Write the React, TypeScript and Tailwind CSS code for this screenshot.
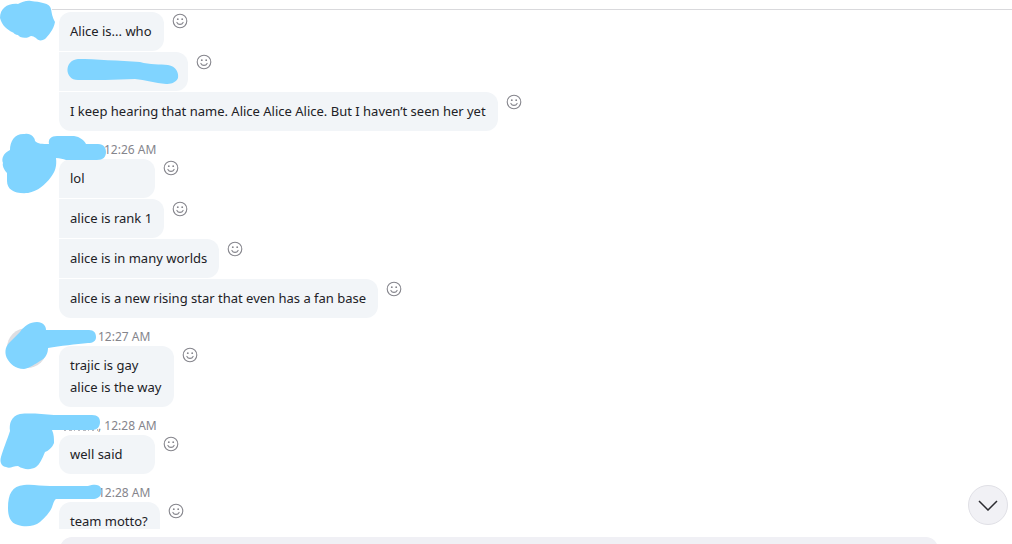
type Message = {
  text?: string;
  scribble?: boolean;
};

type Group = {
  time?: string;
  nameWidth?: string;
  messages: Message[];
  viewBox: string;
  blob: string;
  avatar?: boolean;
  trace?: boolean;
};

const groups: Group[] = [
  {
    messages: [
      { text: 'Alice is... who' },
      { scribble: true },
      { text: 'I keep hearing that name. Alice Alice Alice. But I haven’t seen her yet' },
    ],
    viewBox: '0 12 110 64',
    blob: 'M0 18C0 8 8 3 18 4C22 2 27 0 31 1C40 2 50 3 51 9C52 14 52 16 55 22C54 29 48 36 45 39C42 41 38 41 36 38C33 36 31 35 29 37C24 39 19 37 18 35C13 34 15 33 12 32C8 30 2 26 0 18Z',
  },
  {
    time: '12:26 AM',
    nameWidth: 'w-[45px]',
    messages: [
      { text: 'lol' },
      { text: 'alice is rank 1' },
      { text: 'alice is in many worlds' },
      { text: 'alice is a new rising star that even has a fan base' },
    ],
    viewBox: '0 131 110 64',
    blob: 'M25 134C31 133 35 138 35 141C38 144 42 144 49 144C48 139 51 136 57 136L74 136C80 137 84 140 86 144L98 144C104 144 106 148 106 152C106 157 103 160 97 160L66 160C63 159 60 158 56 158C57 166 55 172 51 177C45 185 38 191 28 193C15 194 7 190 7 181L7 173C4 170 2 165 3 163C1 158 4 153 10 150C10 141 15 133 25 134Z',
  },
  {
    time: '12:27 AM',
    nameWidth: 'w-[39px]',
    messages: [{ text: 'trajic is gay\nalice is the way' }],
    viewBox: '0 318 110 64',
    blob: 'M37 322C43 322 46 326 46 330L89 330C94 330 96 333 96 337C96 341 93 343 88 343C76 344 60 346 48 348C48 353 46 358 40 361C35 364 30 368 24 369C15 369 10 363 8 360C4 354 5 347 9 343L20 332C24 326 30 322 37 322Z',
    avatar: true,
  },
  {
    time: ', 12:28 AM',
    nameWidth: 'w-[39px]',
    messages: [{ text: 'well said' }],
    viewBox: '0 407 110 64',
    blob: 'M20 414C30 413 42 414 54 415L92 415C98 415 100 418 100 422C100 427 97 430 92 430L52 430C54 434 54 439 54 443C52 448 48 451 45 452C42 459 40 464 36 467C31 470 24 470 18 466C13 466 10 469 6 467C0 466 0 460 1 457C3 450 7 440 10 431C9 424 11 416 20 414Z',
    trace: true,
  },
  {
    time: '12:28 AM',
    nameWidth: 'w-[39px]',
    messages: [{ text: 'team motto?' }],
    viewBox: '0 474 110 64',
    blob: 'M24 485C33 484 40 486 50 486L88 486C94 484 99 484 101 488C103 494 99 499 94 499L56 499C53 501 53 507 50 511C46 517 42 520 40 522C34 527 24 527 18 525C10 523 8 516 8 508C8 494 12 486 24 485Z',
  },
];

function Smiley() {
  return (
    <svg className="block size-4" viewBox="0 0 16 16" fill="none" stroke="currentColor">
      <circle cx="8" cy="8" r="6.8" strokeWidth="1.1" />
      <path d="M4.9 9.4C6.1 12 9.9 12 11.1 9.4" strokeWidth="1.1" strokeLinecap="round" />
      <circle cx="5.8" cy="6.2" r="0.9" fill="currentColor" stroke="none" />
      <circle cx="10.2" cy="6.2" r="0.9" fill="currentColor" stroke="none" />
    </svg>
  );
}

function MessageRow({ message }: { message: Message }) {
  return (
    <li className="group flex items-start gap-2">
      <div className="min-w-24 rounded-r-xl bg-[#f2f5f8] pt-2 pr-3 pb-[9px] pl-[11px] text-[13px] leading-[22px] whitespace-pre-line text-[#212126] group-first:rounded-tl-xl group-last:rounded-bl-xl">
        {message.scribble ? (
          <svg className="-mx-1 block h-[22px] w-[114px] overflow-visible" viewBox="66 60 114 22" fill="#80d4ff">
            <path d="M78 59C95 59 120 61 140 62C150 65 160 64 168 65C176 66 179 73 178 78C176 83 170 84 166 84C155 83 145 80 135 79C115 80 95 80 78 80C64 80 64 60 78 59Z" />
          </svg>
        ) : (
          message.text
        )}
      </div>
      <button type="button" aria-label="React" className="mt-0.5 text-[#85858c] group-first:mt-px">
        <Smiley />
      </button>
    </li>
  );
}

function MessageGroup({ group }: { group: Group }) {
  return (
    <section className="relative pl-[59px]">
      {group.time && (
        <div className="flex h-7 items-end text-[12px] leading-[18px] text-[#85858c]">
          <span className={group.nameWidth} />
          <span>{group.time}</span>
        </div>
      )}
      <ul className="flex flex-col gap-px">
        {group.messages.map((message, i) => (
          <MessageRow key={i} message={message} />
        ))}
      </ul>
      <svg
        className="pointer-events-none absolute top-0 left-0 h-16 w-[110px] overflow-visible"
        viewBox={group.viewBox}
        fill="#80d4ff"
      >
        {group.avatar && <circle cx="27" cy="348" r="20" fill="#dedee2" />}
        {group.trace && <path d="M64 430H98" stroke="#b9b9bf" strokeWidth="2" strokeDasharray="2 3 3 2 1 3" />}
        <path d={group.blob} />
      </svg>
    </section>
  );
}

export default function App() {
  return (
    <div className="relative flex h-screen flex-col bg-white font-['Noto_Sans','Open_Sans',sans-serif]">
      <main className="min-h-0 flex-1 overflow-hidden">
        <div className="mb-0.5 ml-[52px] h-2.5 border-b border-[#d9d9dc]" />
        {groups.map((group, i) => (
          <MessageGroup key={i} group={group} />
        ))}
      </main>

      <footer className="h-[15px] shrink-0 overflow-hidden pt-2 pr-[74px] pl-[60px]">
        <input aria-label="Type a message" className="block h-10 w-full rounded-xl bg-[#f0f0f5] px-4 outline-none" />
      </footer>

      <button
        type="button"
        aria-label="Scroll to latest"
        className="absolute right-1 bottom-[19px] flex size-10 items-center justify-center rounded-full border border-[#e0e0e6] bg-[#f1f1f5] text-[#2b2b30]"
      >
        <svg className="h-3 w-5" viewBox="0 0 20 12" fill="none" stroke="currentColor" strokeWidth="1.5">
          <path d="M1 2L10 11L19 2" />
        </svg>
      </button>
    </div>
  );
}
